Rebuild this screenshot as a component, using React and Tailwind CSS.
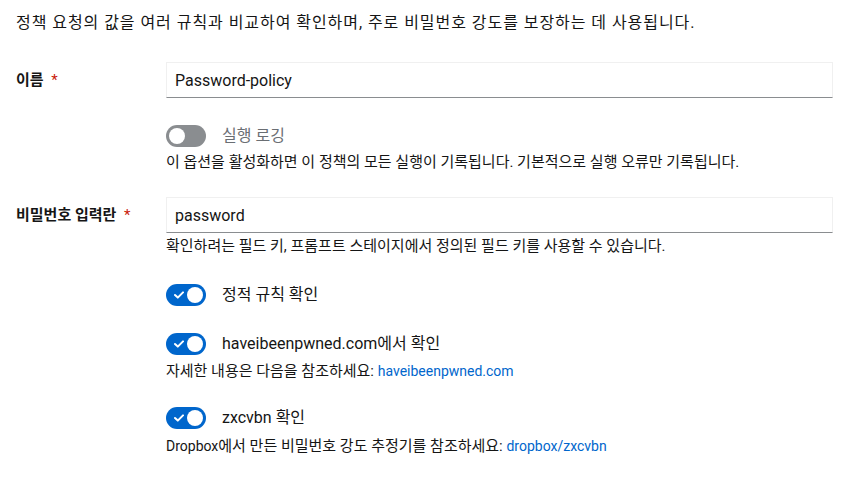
import React, { useState } from "react";

const font = { fontFamily: 'Roboto, "Noto Sans CJK KR", sans-serif' };

const Toggle = ({ on, onChange }) => (
  <button
    type="button"
    onClick={onChange}
    className={`relative w-10 h-[22px] rounded-full shrink-0 ${on ? "bg-[#0066cc]" : "bg-[#8a8d90]"}`}
  >
    {on && (
      <svg className="absolute left-[8px] top-[7px]" width="10" height="8" viewBox="0 0 10 8">
        <path d="M1 4 L3.8 6.6 L9 1.4" fill="none" stroke="white" strokeWidth="2" strokeLinecap="round" strokeLinejoin="round" />
      </svg>
    )}
    <span
      className={`absolute top-[3px] w-4 h-4 rounded-full bg-white ${on ? "left-[21px]" : "left-[3px]"}`}
    />
  </button>
);

const SwitchRow = ({ on, onChange, label, className }) => (
  <div className={`flex items-center gap-4 ${className}`}>
    <Toggle on={on} onChange={onChange} />
    <span className={`text-[16px] ${on ? "text-[#151515]" : "text-[#6a6e73]"}`}>{label}</span>
  </div>
);

export default function App() {
  const [name, setName] = useState("Password-policy");
  const [field, setField] = useState("password");
  const [logging, setLogging] = useState(false);
  const [staticRules, setStaticRules] = useState(true);
  const [hibp, setHibp] = useState(true);
  const [zxcvbn, setZxcvbn] = useState(true);

  return (
    <div style={font} className="bg-white min-h-[477px] px-4 pt-[13px] text-[#151515]">
      <p className="text-[16px] leading-5 tracking-[0.95px]">
        정책 요청의 값을 여러 규칙과 비교하여 확인하며, 주로 비밀번호 강도를 보장하는 데 사용됩니다.
      </p>

      <div className="flex items-center mt-[29px]">
        <label className="w-[150px] text-[15px] font-bold">
          이름 <span className="text-[#c9190b] font-normal ml-1">*</span>
        </label>
        <input
          value={name}
          onChange={(e) => setName(e.target.value)}
          className="flex-1 h-9 px-2 text-[16px] text-[#151515] border border-[#f0f0f0] border-b-[#8a8d90] outline-none"
        />
      </div>

      <div className="ml-[150px] mt-[26px]">
        <SwitchRow on={logging} onChange={() => setLogging(!logging)} label="실행 로깅" />
        <p className="text-[15px] leading-5 mt-1">
          이 옵션을 활성화하면 이 정책의 모든 실행이 기록됩니다. 기본적으로 실행 오류만 기록됩니다.
        </p>
      </div>

      <div className="flex items-center mt-[25px]">
        <label className="w-[150px] text-[15px] font-bold">
          비밀번호 입력란 <span className="text-[#c9190b] font-normal ml-1">*</span>
        </label>
        <input
          value={field}
          onChange={(e) => setField(e.target.value)}
          className="flex-1 h-9 px-2 text-[16px] text-[#151515] border border-[#f0f0f0] border-b-[#8a8d90] outline-none"
        />
      </div>
      <p className="ml-[150px] text-[15px] leading-5 mt-[3px]">
        확인하려는 필드 키, 프롬프트 스테이지에서 정의된 필드 키를 사용할 수 있습니다.
      </p>

      <div className="ml-[150px]">
        <SwitchRow className="mt-[27px]" on={staticRules} onChange={() => setStaticRules(!staticRules)} label="정적 규칙 확인" />

        <SwitchRow className="mt-[25px]" on={hibp} onChange={() => setHibp(!hibp)} label="haveibeenpwned.com에서 확인" />
        <p className="text-[15px] leading-5 mt-[5px]">
          자세한 내용은 다음을 참조하세요: <a href="#" className="text-[14px] text-[#0066cc]">haveibeenpwned.com</a>
        </p>

        <SwitchRow className="mt-[25px]" on={zxcvbn} onChange={() => setZxcvbn(!zxcvbn)} label="zxcvbn 확인" />
        <p className="text-[15px] leading-5 mt-[6px]">
          <span className="text-[14px]">Dropbox</span>에서 만든 비밀번호 강도 추정기를 참조하세요: <a href="#" className="text-[14px] text-[#0066cc]">dropbox/zxcvbn</a>
        </p>
      </div>
    </div>
  );
}
